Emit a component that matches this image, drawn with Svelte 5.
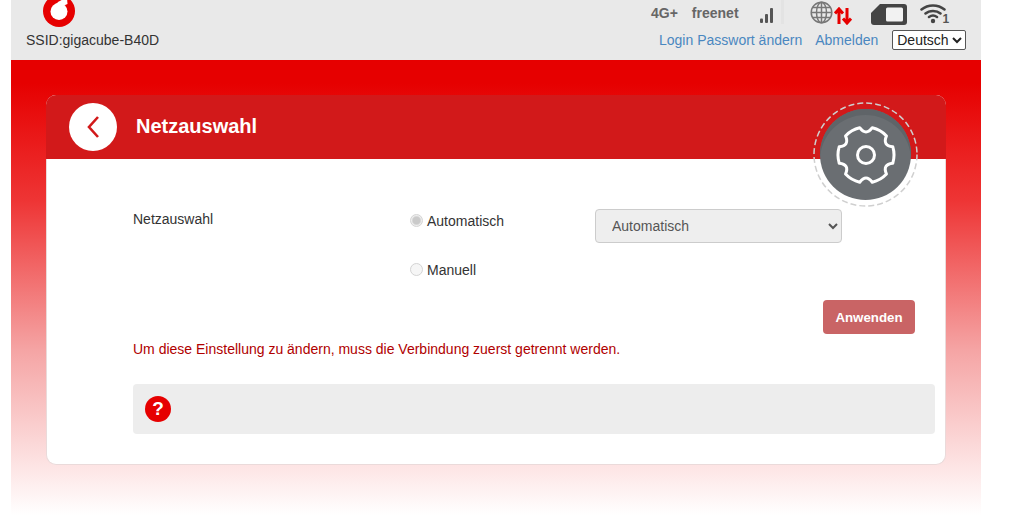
<script>
  let lang = 'Deutsch';
  let mode = 'auto';
  let net = 'Automatisch';

  // six squared teeth, tips at 0, 60, 120 degrees and so on
  function polar(r, deg) {
    const a = (deg * Math.PI) / 180;
    return (30 + r * Math.cos(a)).toFixed(2) + ' ' + (30 + r * Math.sin(a)).toFixed(2);
  }
  let gearPath = 'M' + polar(28, -17);
  for (let i = 0; i < 6; i++) {
    const a = i * 60;
    gearPath += ' Q' + polar(29.3, a) + ' ' + polar(28, a + 17);
    gearPath += ' Q' + polar(18.7, a + 30) + ' ' + polar(28, a + 43);
  }
  gearPath += 'Z';
</script>

<div class="page">
  <header class="top">
    <div class="brand">
      <svg class="logo" viewBox="0 0 32 32" width="32" height="32">
        <circle cx="16" cy="16" r="16" fill="#e60000"/>
        <circle cx="16" cy="16.500" r="8.500" fill="#fff"/>
        <path fill="#fff" d="M13 9c2-2.500 6-4.500 11-6l.5 6-6 2.500z"/>
      </svg>
      <div class="ssid">SSID:gigacube-B40D</div>
    </div>
    <div class="status">
      <div class="icons">
        <b class="net">4G+</b>
        <b class="net op">freenet</b>
        <svg class="bars" width="16" height="16" viewBox="0 0 16 16">
          <rect x="1" y="11.500" width="3" height="4.500" rx="1" fill="#555"/>
          <rect x="6" y="7" width="3" height="9" rx="1" fill="#555"/>
          <rect x="11" y="1" width="3" height="15" rx="1" fill="#555"/>
        </svg>
        <span class="sep"></span>
        <svg class="globe" width="23" height="23" viewBox="0 0 23 23" fill="none" stroke="#777" stroke-width="1.500">
          <circle cx="11.500" cy="11.500" r="10.300"/>
          <ellipse cx="11.500" cy="11.500" rx="5" ry="10.300"/>
          <path d="M11.500 1v21M1 11.500h21M2.500 6.500h18M2.500 16.500h18"/>
        </svg>
        <svg class="arrows" width="18" height="18" viewBox="0 0 18 18" fill="none" stroke="#e60000" stroke-width="3">
          <path d="M5 17V3M1 6.500 5 2l4 4.500M13 1v14M9 11.500l4 4.500 4-4.500"/>
        </svg>
        <svg class="sim" width="36" height="21" viewBox="0 0 36 21">
          <path fill="#444" d="M9 0h24a3 3 0 0 1 3 3v15a3 3 0 0 1-3 3H3a3 3 0 0 1-3-3V9z"/>
          <rect x="15" y="3.500" width="17" height="14" rx="1.500" fill="#f2f2f2"/>
        </svg>
        <svg class="wifi" width="26" height="21" viewBox="0 0 26 21" fill="none" stroke="#444" stroke-width="2.500" stroke-linecap="round">
          <path d="M1.500 6.500c6.500-5.500 16.500-5.500 23 0M5.500 10.500c4-3.500 11-3.500 15 0M9 14c2.500-1.800 5.500-1.800 8 0"/>
          <circle cx="13" cy="18" r="2.200" fill="#444" stroke="none"/>
        </svg>
        <b class="wnum">1</b>
      </div>
      <div class="links">
        <a href="#pw">Login Passwort ändern</a>
        <a href="#out">Abmelden</a>
        <select class="lang" bind:value={lang}>
          <option>Deutsch</option>
          <option>English</option>
        </select>
      </div>
    </div>
  </header>

  <main class="bg">
    <section class="card">
      <div class="head">
        <button class="back" aria-label="Zurück">
          <svg width="16" height="26" viewBox="0 0 16 26" fill="none" stroke="#d2191a" stroke-width="2.600">
            <path d="M13 3 4 13l9 10"/>
          </svg>
        </button>
        <h1>Netzauswahl</h1>
      </div>

      <div class="gear">
        <svg class="ring" width="105" height="105" viewBox="0 0 105 105" fill="none" stroke="#cfcfcf" stroke-width="1.500" stroke-dasharray="6 3">
          <circle cx="52.500" cy="52.500" r="51.500"/>
        </svg>
        <span class="disc">
          <svg width="62" height="62" viewBox="-1 -1 62 62" fill="none" stroke="#fff" stroke-width="3" stroke-linejoin="round">
            <path d={gearPath}/>
            <circle cx="30" cy="30" r="8.500"/>
          </svg>
        </span>
      </div>

      <div class="body">
        <div class="form">
          <div class="lbl">Netzauswahl</div>
          <div class="radios">
            <label><input type="radio" name="mode" value="auto" bind:group={mode} disabled /> Automatisch</label>
            <label><input type="radio" name="mode" value="man" bind:group={mode} disabled /> Manuell</label>
          </div>
          <select class="netsel" bind:value={net} disabled>
            <option>Automatisch</option>
          </select>
        </div>
        <div class="actions">
          <button class="apply" disabled>Anwenden</button>
        </div>
        <p class="warn">Um diese Einstellung zu ändern, muss die Verbindung zuerst getrennt werden.</p>
        <div class="help">
          <span class="q">?</span>
        </div>
      </div>
    </section>
  </main>
</div>

<style>
  :global(body) {
    margin: 0;
    background: #fff;
  }

  .page {
    width: 970px;
    height: 515px;
    margin-left: 11px;
    font-family: "Liberation Sans", Arial, sans-serif;
    font-size: 14px;
    color: #333;
    overflow: hidden;
  }

  .top {
    height: 60px;
    background: #e9e9e9;
    display: flex;
    justify-content: space-between;
  }

  .brand {
    padding-left: 15px;
    width: 200px;
  }
  .logo {
    display: block;
    margin: -5px 0 0 17px;
  }
  .ssid {
    margin-top: 5px;
    line-height: 16px;
  }

  .status {
    width: 316px;
    padding-right: 15px;
  }
  .icons {
    height: 28px;
    display: flex;
    align-items: flex-start;
    padding-left: 1px;
  }
  .net {
    font-size: 14px;
    color: #666;
    margin-top: 5px;
    line-height: 16px;
  }
  .op { margin-left: 14px; }
  .bars { margin: 7px 0 0 20px; }
  .sep {
    width: 3px;
    height: 24px;
    background: #e3e3e3;
    margin-left: 6px;
  }
  .globe { margin: 1px 0 0 26px; }
  .arrows { margin: 7px 0 0 1px; }
  .sim { margin: 4px 0 0 19px; }
  .wifi { margin: 3px 0 0 13px; }
  .wnum {
    font-size: 12px;
    color: #555;
    margin: 13px 0 0 -3px;
    line-height: 12px;
  }

  .links {
    display: flex;
    align-items: center;
    height: 24px;
    margin-left: 9px;
    white-space: nowrap;
  }
  .links a {
    color: #4a87c0;
    text-decoration: none;
    margin-right: 13px;
  }
  .lang {
    font-family: inherit;
    font-size: 14px;
    color: #222;
    background: #fff;
    border: 1px solid #555;
    border-radius: 2px;
    height: 20px;
    width: 74px;
    flex: none;
    padding: 0;
    margin-left: 1px;
  }

  .bg {
    display: block;
    height: 455px;
    padding: 35px 35px 0;
    box-sizing: border-box;
    background: linear-gradient(#e60000 0, #e60000 5%, #ee3535 31%, #f5a5a5 64%, #fde6e6 90%, #fff 100%);
  }

  .card {
    position: relative;
    width: 900px;
    height: 370px;
    box-sizing: border-box;
    background: #fff;
    border-radius: 10px;
    border: 1px solid #eadada;
    border-top: 0;
  }

  .head {
    height: 64px;
    margin: 0 -1px;
    border-radius: 10px 10px 0 0;
    background: #d2191a;
    display: flex;
    align-items: center;
    padding-left: 23px;
  }
  .back {
    width: 48px;
    height: 48px;
    border: 0;
    padding: 0;
    border-radius: 50%;
    background: #fff;
    display: flex;
    align-items: center;
    justify-content: center;
  }
  .head h1 {
    margin: -2px 0 0 19px;
    font-size: 20px;
    font-weight: bold;
    color: #fff;
  }

  .gear {
    position: absolute;
    left: 766px;
    top: 7px;
    width: 105px;
    height: 105px;
    display: flex;
    align-items: center;
    justify-content: center;
  }
  .ring {
    position: absolute;
    inset: 0;
  }
  .disc {
    width: 91px;
    height: 91px;
    border-radius: 50%;
    background: #6a6e72;
    box-shadow: inset 0 6px 0 #5f6468;
    display: flex;
    align-items: center;
    justify-content: center;
    position: relative;
  }

  .body {
    padding: 50px 10px 0 86px;
  }
  .form {
    display: flex;
    align-items: flex-start;
    height: 91px;
  }
  .lbl {
    width: 277px;
    margin-top: 2px;
    line-height: 16px;
  }
  .radios {
    width: 185px;
    display: flex;
    flex-direction: column;
    gap: 33px;
    margin-top: 4px;
  }
  .radios label {
    display: flex;
    align-items: center;
    line-height: 16px;
    height: 16px;
  }
  .radios input {
    appearance: none;
    width: 13px;
    height: 13px;
    margin: -2px 4px 0 0;
    border-radius: 50%;
    border: 1px solid #d4d4d4;
    background: #f6f6f6;
    box-sizing: border-box;
  }
  .radios input:checked {
    background: radial-gradient(circle, #cacaca 0 3.500px, #eee 5px);
  }
  .netsel {
    width: 247px;
    height: 34px;
    margin-top: 0;
    padding: 0 12px;
    font-family: inherit;
    font-size: 14px;
    color: #555;
    opacity: 1;
    background: #eee;
    border: 1px solid #ccc;
    border-radius: 4px;
  }

  .actions {
    display: flex;
    justify-content: flex-end;
    padding-right: 20px;
  }
  .apply {
    width: 92px;
    height: 34px;
    border: 0;
    border-radius: 4px;
    background: #c96465;
    color: #fff;
    font-family: inherit;
    font-size: 13.300px;
    font-weight: bold;
    padding: 0;
  }

  .warn {
    margin: 0;
    padding-top: 7px;
    line-height: 17px;
    color: #b00000;
  }

  .help {
    margin-top: 26px;
    height: 50px;
    background: #ededed;
    border-radius: 4px;
    display: flex;
    align-items: center;
    padding-left: 12px;
  }
  .q {
    width: 26px;
    height: 26px;
    border-radius: 50%;
    background: #e60000;
    color: #fff;
    font-size: 19px;
    font-weight: bold;
    line-height: 26px;
    text-align: center;
  }
</style>
